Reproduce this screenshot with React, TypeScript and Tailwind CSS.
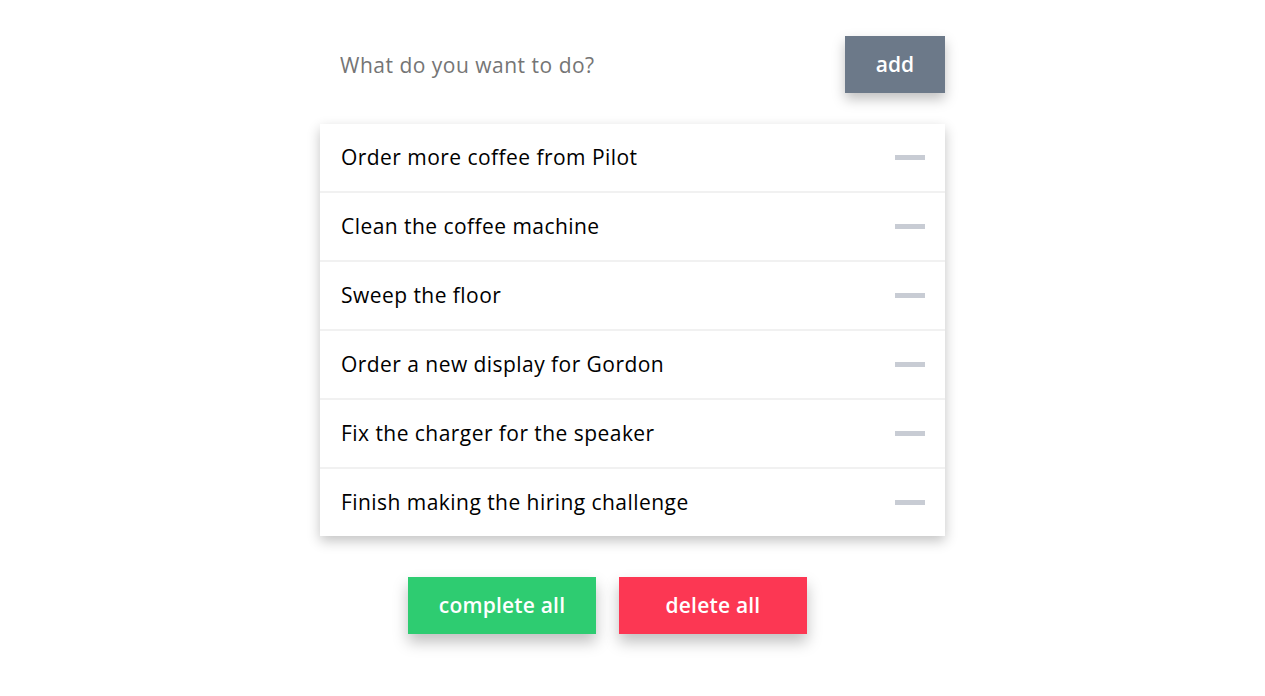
import React, { useState } from "react";

const initialTodos = [
  "Order more coffee from Pilot",
  "Clean the coffee machine",
  "Sweep the floor",
  "Order a new display for Gordon",
  "Fix the charger for the speaker",
  "Finish making the hiring challenge"
];

export default function App() {
  const [todos, setTodos] = useState<string[]>(initialTodos);
  const [text, setText] = useState("");

  return (
    <div
      className="min-h-screen bg-white"
      style={{ fontFamily: '"Open Sans", "Noto Sans", sans-serif' }}
    >
      <div className="mx-auto w-[625px] pt-[36px]">
        <div className="flex items-center h-[57px]">
          <input
            className="flex-1 h-full pl-[20px] text-[21px] tracking-[0.5px] text-gray-800 placeholder:text-[#757575] outline-none bg-transparent"
            placeholder="What do you want to do?"
            value={text}
            onChange={e => setText(e.target.value)}
          />
          <button
            className="w-[100px] h-[57px] bg-[#6c7989] text-white text-[21px] font-semibold shadow-[0_6px_12px_rgba(0,0,0,0.25)]"
            onClick={() => {
              if (!text.trim()) return;
              setTodos([...todos, text.trim()]);
              setText("");
            }}
          >
            add
          </button>
        </div>

        <ul className="mt-[31px] bg-white shadow-[0_5px_12px_rgba(0,0,0,0.24)]">
          {todos.map((t, i) => (
            <li
              key={i}
              className={
                "flex items-center justify-between pl-[21px] pr-[20px] " +
                (i < todos.length - 1 ? "h-[69px] border-b-2 border-[#f1f1f1]" : "h-[67px]")
              }
            >
              <span className="text-[21px] tracking-[0.45px] text-black">{t}</span>
              <button
                className="w-[30px] h-[5px] bg-[#c8ccd4]"
                onClick={() => setTodos(todos.filter((_, j) => j !== i))}
              />
            </li>
          ))}
        </ul>

        <div className="flex gap-[23px] pl-[88px] mt-[41px]">
          <button className="w-[188px] h-[57px] bg-[#2ecc71] text-white text-[21px] tracking-[0.2px] font-semibold shadow-[0_8px_14px_rgba(0,0,0,0.25)]">
            complete all
          </button>
          <button
            className="w-[188px] h-[57px] bg-[#fc3753] text-white text-[21px] tracking-[0.2px] font-semibold shadow-[0_8px_14px_rgba(0,0,0,0.25)]"
            onClick={() => setTodos([])}
          >
            delete all
          </button>
        </div>
      </div>
    </div>
  );
}
